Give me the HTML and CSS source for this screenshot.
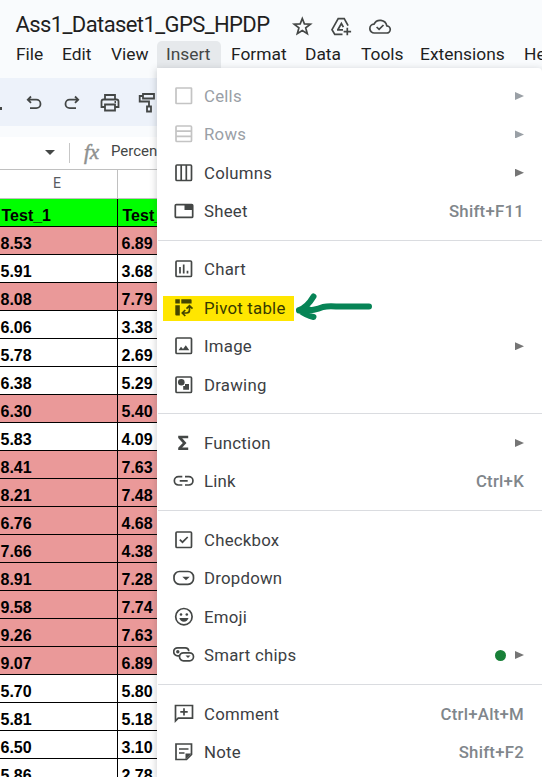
FILE: index.html
```html
<!DOCTYPE html>
<html lang="en">
<head>
<meta charset="utf-8">
<title>Ass1_Dataset1_GPS_HPDP</title>
<link rel="stylesheet" href="styles.css">
</head>
<body>
<div class="app">
  <header class="titlebar">
    <h1 class="title">Ass1_Dataset1_GPS_HPDP</h1>
    <svg class="ticon" width="24" height="24" viewBox="0 0 24 24"><path d="M12.300 4.500l2.100 5.400 6 .3-4.700 3.700 1.600 5.800-5-3.200-5 3.200 1.600-5.800-4.700-3.700 6-.3z" stroke-width="1.700"/></svg>
    <svg class="ticon" width="24" height="24" viewBox="0 0 24 24"><path d="M13.500 20.400H5.800L3 15.700 9.200 4.600h6l3.900 7M8.700 16l3.700-6.500 2 3.600M8 15.900h6M18.300 13.800v7.500M14.600 17.600h7.500" stroke-width="1.700"/></svg>
    <svg class="ticon" width="24" height="24" viewBox="0 0 24 24"><path d="M6.500 19h12a3.600 3.600 0 0 0 .3-7.200A6.800 6.800 0 0 0 6 10.200 4.400 4.400 0 0 0 6.500 19zM8.600 13l2.500 2.400 4.400-4.400" stroke-width="1.700"/></svg>
  </header>
  <nav class="menubar">
    <span class="w-file">File</span><span class="w-edit">Edit</span><span class="w-view">View</span><span class="w-insert open">Insert</span><span class="w-format">Format</span><span class="w-data">Data</span><span class="w-tools">Tools</span><span class="w-ext">Extensions</span><span>Help</span>
  </nav>
  <div class="toolbar">
    <i class="search-tail"></i>
    <svg class="undo" width="20" height="20" viewBox="0 0 20 20"><path d="M7 3.500L3.800 6.700 7 9.900M4 6.700h8.300a4.200 4.200 0 0 1 0 8.400H6"/></svg>
    <svg class="redo" width="20" height="20" viewBox="0 0 20 20"><path d="M13 3.500l3.200 3.200L13 9.900M16 6.700H7.700a4.200 4.200 0 0 0 0 8.400H14"/></svg>
    <svg class="print" width="20" height="20" viewBox="0 0 20 20"><path d="M5 6V2h10v4M5 14H1.500V8.500Q1.500 6.500 3.500 6.500h13q2 0 2 2V14H15M5 11.500h10v6H5zM14.500 9h1.500"/></svg>
    <svg class="paint" width="20" height="22" viewBox="0 0 20 22"><path d="M5 2h11v4.500H5zM5 4H1.700v5.500H11V14M9 14.500h4v5H9z"/></svg>
  </div>
  <div class="formula">
    <i class="caret"></i><i class="vline"></i><span class="fx"><i>f</i><i>x</i></span><span class="content">Percentage</span>
  </div>
  <div class="letters"><span>E</span><span></span></div>
  <div class="sheet">
    <div class="row head"><span>Test_1</span><span>Test_2</span></div>
    <div class="row red"><span>8.53</span><span>6.89</span></div>
    <div class="row"><span>5.91</span><span>3.68</span></div>
    <div class="row red"><span>8.08</span><span>7.79</span></div>
    <div class="row"><span>6.06</span><span>3.38</span></div>
    <div class="row"><span>5.78</span><span>2.69</span></div>
    <div class="row"><span>6.38</span><span>5.29</span></div>
    <div class="row red"><span>6.30</span><span>5.40</span></div>
    <div class="row"><span>5.83</span><span>4.09</span></div>
    <div class="row red"><span>8.41</span><span>7.63</span></div>
    <div class="row red"><span>8.21</span><span>7.48</span></div>
    <div class="row red"><span>6.76</span><span>4.68</span></div>
    <div class="row red"><span>7.66</span><span>4.38</span></div>
    <div class="row red"><span>8.91</span><span>7.28</span></div>
    <div class="row red"><span>9.58</span><span>7.74</span></div>
    <div class="row red"><span>9.26</span><span>7.63</span></div>
    <div class="row red"><span>9.07</span><span>6.89</span></div>
    <div class="row"><span>5.70</span><span>5.80</span></div>
    <div class="row"><span>5.81</span><span>5.18</span></div>
    <div class="row"><span>6.50</span><span>3.10</span></div>
    <div class="row"><span>5.86</span><span>2.78</span></div>
  </div>

  <div class="menu">
    <div class="item off"><svg viewBox="0 0 22 22"><rect x="3" y="3" width="15.500" height="15.500" rx=".5"/></svg><b>Cells</b><i class="arrow"></i></div>
    <div class="item off"><svg viewBox="0 0 22 22"><rect x="3" y="3" width="15.500" height="15.500" rx="1"/><path d="M3 8.200h15.500M3 13.300h15.500"/></svg><b>Rows</b><i class="arrow"></i></div>
    <div class="item"><svg viewBox="0 0 22 22"><rect x="3" y="3" width="15.500" height="15.500" rx="1"/><path d="M8.200 3v15.500M13.300 3v15.500"/></svg><b>Columns</b><i class="arrow"></i></div>
    <div class="item"><svg viewBox="0 0 22 22"><rect x="2.300" y="4.600" width="17.400" height="12.800" rx="1"/><path class="f" d="M11.500 4.500h8V10h-8z"/></svg><b>Sheet</b><kbd>Shift+F11</kbd></div>
    <hr>
    <div class="item"><svg viewBox="0 0 22 22"><rect x="3" y="3" width="15.500" height="15.500" rx="1"/><path d="M7 9v6.500M10.700 6.500v9M14.500 12.800v2.700"/></svg><b>Chart</b></div>
    <div class="item pivot"><svg viewBox="0 0 22 22"><path class="f" d="M2.300 2.300h4.500v4.300H2.300zM8.300 2.300h9.300q1 0 1 1v3.300H8.300zM2.300 8.200h4.500v10.300H3.300q-1 0-1-1z"/><path d="M10 16h3.500q3 0 3-3v-3M12.300 13l-3 3 3 3M13.500 11.700l3-3 3 3"/></svg><b>Pivot table</b></div>
    <div class="item"><svg viewBox="0 0 22 22"><rect x="3" y="3" width="15.500" height="15.500" rx="1"/><path class="f" d="M5.500 15.200l2.500-3.500 2 2.300 2.800-3.800 3.500 5z"/></svg><b>Image</b><i class="arrow"></i></div>
    <div class="item"><svg viewBox="0 0 22 22"><rect x="3" y="3" width="15.500" height="15.500" rx="1"/><circle class="f" cx="8.300" cy="8.300" r="3.300"/><path class="f" d="M12 10h4v5.800h-5.800V12H12z"/></svg><b>Drawing</b></div>
    <hr>
    <div class="item"><svg viewBox="0 0 22 22"><path class="f" d="M5.200 3.800h10v2.500H9.200l4.300 4.600-4.300 4.700h6V18h-10v-2.200L9.800 11 5.200 6z"/></svg><b>Function</b><i class="arrow"></i></div>
    <div class="item"><svg viewBox="0 0 22 22"><path d="M9.300 6.700H5.500a4 4 0 0 0 0 8.300h3.800M12 6.700h3.800a4 4 0 0 1 0 8.300H12M6.700 10.900h8"/></svg><b>Link</b><kbd>Ctrl+K</kbd></div>
    <hr>
    <div class="item"><svg viewBox="0 0 22 22"><rect x="3" y="3" width="15.500" height="15.500" rx="1"/><path d="M6.800 10.600l2.700 2.600 5.200-5.200"/></svg><b>Checkbox</b></div>
    <div class="item"><svg viewBox="0 0 22 22"><rect x="1" y="4.500" width="19.500" height="12.800" rx="5.500"/><path class="f" d="M9.300 9.700h7.500L13 13.300z"/></svg><b>Dropdown</b></div>
    <div class="item"><svg viewBox="0 0 22 22"><circle cx="10.900" cy="10.700" r="8.200"/><circle class="f" cx="8" cy="8.500" r="1.300"/><circle class="f" cx="13.800" cy="8.500" r="1.300"/><path class="f" d="M6.300 12h9.200q-1.100 3.700-4.600 3.700T6.300 12z"/></svg><b>Emoji</b></div>
    <div class="item"><svg viewBox="0 0 22 22"><path d="M6 11.800H4.700a4 4 0 0 1 0-8h7.500q3.300 0 3.600 3.400"/><circle class="f" cx="4.800" cy="7.800" r="1.700"/><rect x="6.500" y="8.800" width="14" height="8" rx="4"/><path class="f" d="M12.500 11.500h5L15 14z"/></svg><b>Smart chips</b><i class="dot"></i><i class="arrow"></i></div>
    <hr>
    <div class="item"><svg viewBox="0 0 22 22"><path d="M2.500 18V2.500h17v12.700H5.200L2.500 18zM11 5.200v7.400M7.300 8.900h7.400"/></svg><b>Comment</b><kbd>Ctrl+Alt+M</kbd></div>
    <div class="item"><svg viewBox="0 0 22 22"><path d="M3 3h15.500v10.500l-5 5H3zM6 8h9.500M6 12h5.500"/><path class="f" d="M12.500 18.500v-6h6z"/></svg><b>Note</b><kbd>Shift+F2</kbd></div>
  </div>
  <svg class="pointer" width="82" height="32" viewBox="0 0 82 32"><path d="M20.500 5.500Q14 16.500 6 19Q13 24.500 20.500 26M6 19.500Q19 20.500 30 16Q35 15 43 15.500H76"/><path class="tip" d="M4 19.500q4-3 10-5l8 3-8 5z"/></svg>
</div>
</body>
</html>
```

FILE: styles.css
```css
* { box-sizing: border-box; }
body { margin: 0; }
.app {
  position: relative;
  width: 542px;
  height: 777px;
  overflow: hidden;
  background: #f9fbfd;
  font-family: Roboto, "Liberation Sans", sans-serif;
}
svg { fill: none; stroke: #444746; flex: none; }

.titlebar { display: flex; height: 41px; padding-left: 15.500px; }
.title {
  width: 274.500px;
  margin: 10px 0 0;
  font: 400 22px/30px Roboto, sans-serif;
  letter-spacing: -.6px;
  color: #1f1f1f;
  white-space: nowrap;
}
.ticon { margin: 14px 15px 0 0; }

.menubar { display: flex; height: 37px; padding-left: 6px; font-size: 17.400px; line-height: 26px; color: #1f1f1f; white-space: nowrap; }
.menubar span { height: 27px; padding-left: 10px; flex: none; }
.menubar .open { background: #e6e9ec; border-radius: 5px 5px 0 0; padding-left: 9px; color: #444746; }
.w-file { width: 46px; }
.w-edit { width: 49px; }
.w-view { width: 56px; }
.w-insert { width: 64px; }
.w-format { width: 74px; }
.w-data { width: 56px; }
.w-tools { width: 59px; }
.w-ext { width: 104px; }

.toolbar { display: flex; height: 48px; padding-top: 15px; background: #edf2fa; }
.toolbar svg { stroke-width: 1.8; }
.search-tail { width: 2px; height: 3px; margin-top: 14px; background: #444746; }
.undo { margin-left: 22px; }
.redo { margin-left: 18px; }
.print { margin-left: 18px; }
.paint { margin-left: 18px; margin-top: -1px; }

.formula { display: flex; height: 44px; border-top: 11px solid #f9fbfd; border-bottom: 1px solid #c0c0c0; background: #fff; }
.caret { width: 10px; height: 5px; margin: 13px 0 0 45px; background: #444746; clip-path: polygon(0 0, 100% 0, 50% 100%); }
.vline { width: 1px; height: 20px; margin: 6px 0 0 14px; background: #c7c7c7; }
.fx { width: 27px; margin-left: 14px; font: italic 400 21px/30px "Liberation Serif", serif; color: #8f9190; letter-spacing: -.2px; -webkit-text-stroke: .5px #8f9190; }
.content { font-size: 15px; line-height: 29px; color: #444746; }

.letters { display: flex; height: 29px; border-bottom: 1px solid #c0c0c0; background: #fff; }
.letters span { width: 118px; border-right: 1px solid #c0c0c0; text-align: center; font-size: 14px; line-height: 27px; color: #575b5f; padding-right: 3px; }

.row { display: flex; height: 28px; border-bottom: 1px solid #000; background: #fff; font: 700 16px/33px "Liberation Sans", sans-serif; color: #000; }
.row span { width: 118px; padding-left: .5px; border-right: 1px solid #000; overflow: hidden; }
.row span + span { padding-left: 3.500px; }
.row.red { background: #ea9999; }
.row.head { background: #0f0; }
.row.head span { padding-left: 1.500px; }
.row.head span + span { padding-left: 4.500px; }

.menu {
  position: absolute;
  left: 157px;
  top: 68px;
  width: 385px;
  height: 730px;
  padding: 8.800px 0;
  background: #fff;
  border-radius: 0 4px 0 0;
  box-shadow: 0 2px 7px 1px rgba(60, 64, 67, .22);
}
.item { display: flex; align-items: center; height: 38.400px; padding: 0 18px 0 15.500px; font-size: 16.800px; color: #3c4043; }
.item svg { width: 22px; height: 22px; margin-right: 9.500px; stroke-width: 1.700; }
.item b { flex: 1; font-weight: 400; letter-spacing: .24px; white-space: nowrap; }
.item kbd { font: 500 16.800px Roboto, sans-serif; color: #80868b; letter-spacing: .24px; }
.item .f { fill: #444746; stroke: none; }
.item.off { color: #9aa0a6; }
.item.off svg { stroke: #c4c4c4; }
.arrow { width: 9px; height: 8px; background: #757575; clip-path: polygon(0 0, 100% 50%, 0 100%); }
.off .arrow { background: #9aa0a6; }
.dot { width: 11px; height: 11px; margin-right: 9px; border-radius: 50%; background: #188038; }
.menu hr { height: 1px; margin: 9.400px 0 9.500px 1px; border: 0; background: #dadce0; }
.menu hr ~ hr { margin-bottom: 9.700px; }
.pivot { color: #363900; background: linear-gradient(#ffe600, #ffe600) 6px 7px / 131px 25px no-repeat; }
.pivot svg { stroke: #444500; }
.pivot .f { fill: #444500; }

.pointer { position: absolute; left: 293px; top: 291px; stroke: #078456; stroke-width: 6; stroke-linecap: round; stroke-linejoin: round; }
.pointer .tip { fill: #078456; stroke: none; }
```
